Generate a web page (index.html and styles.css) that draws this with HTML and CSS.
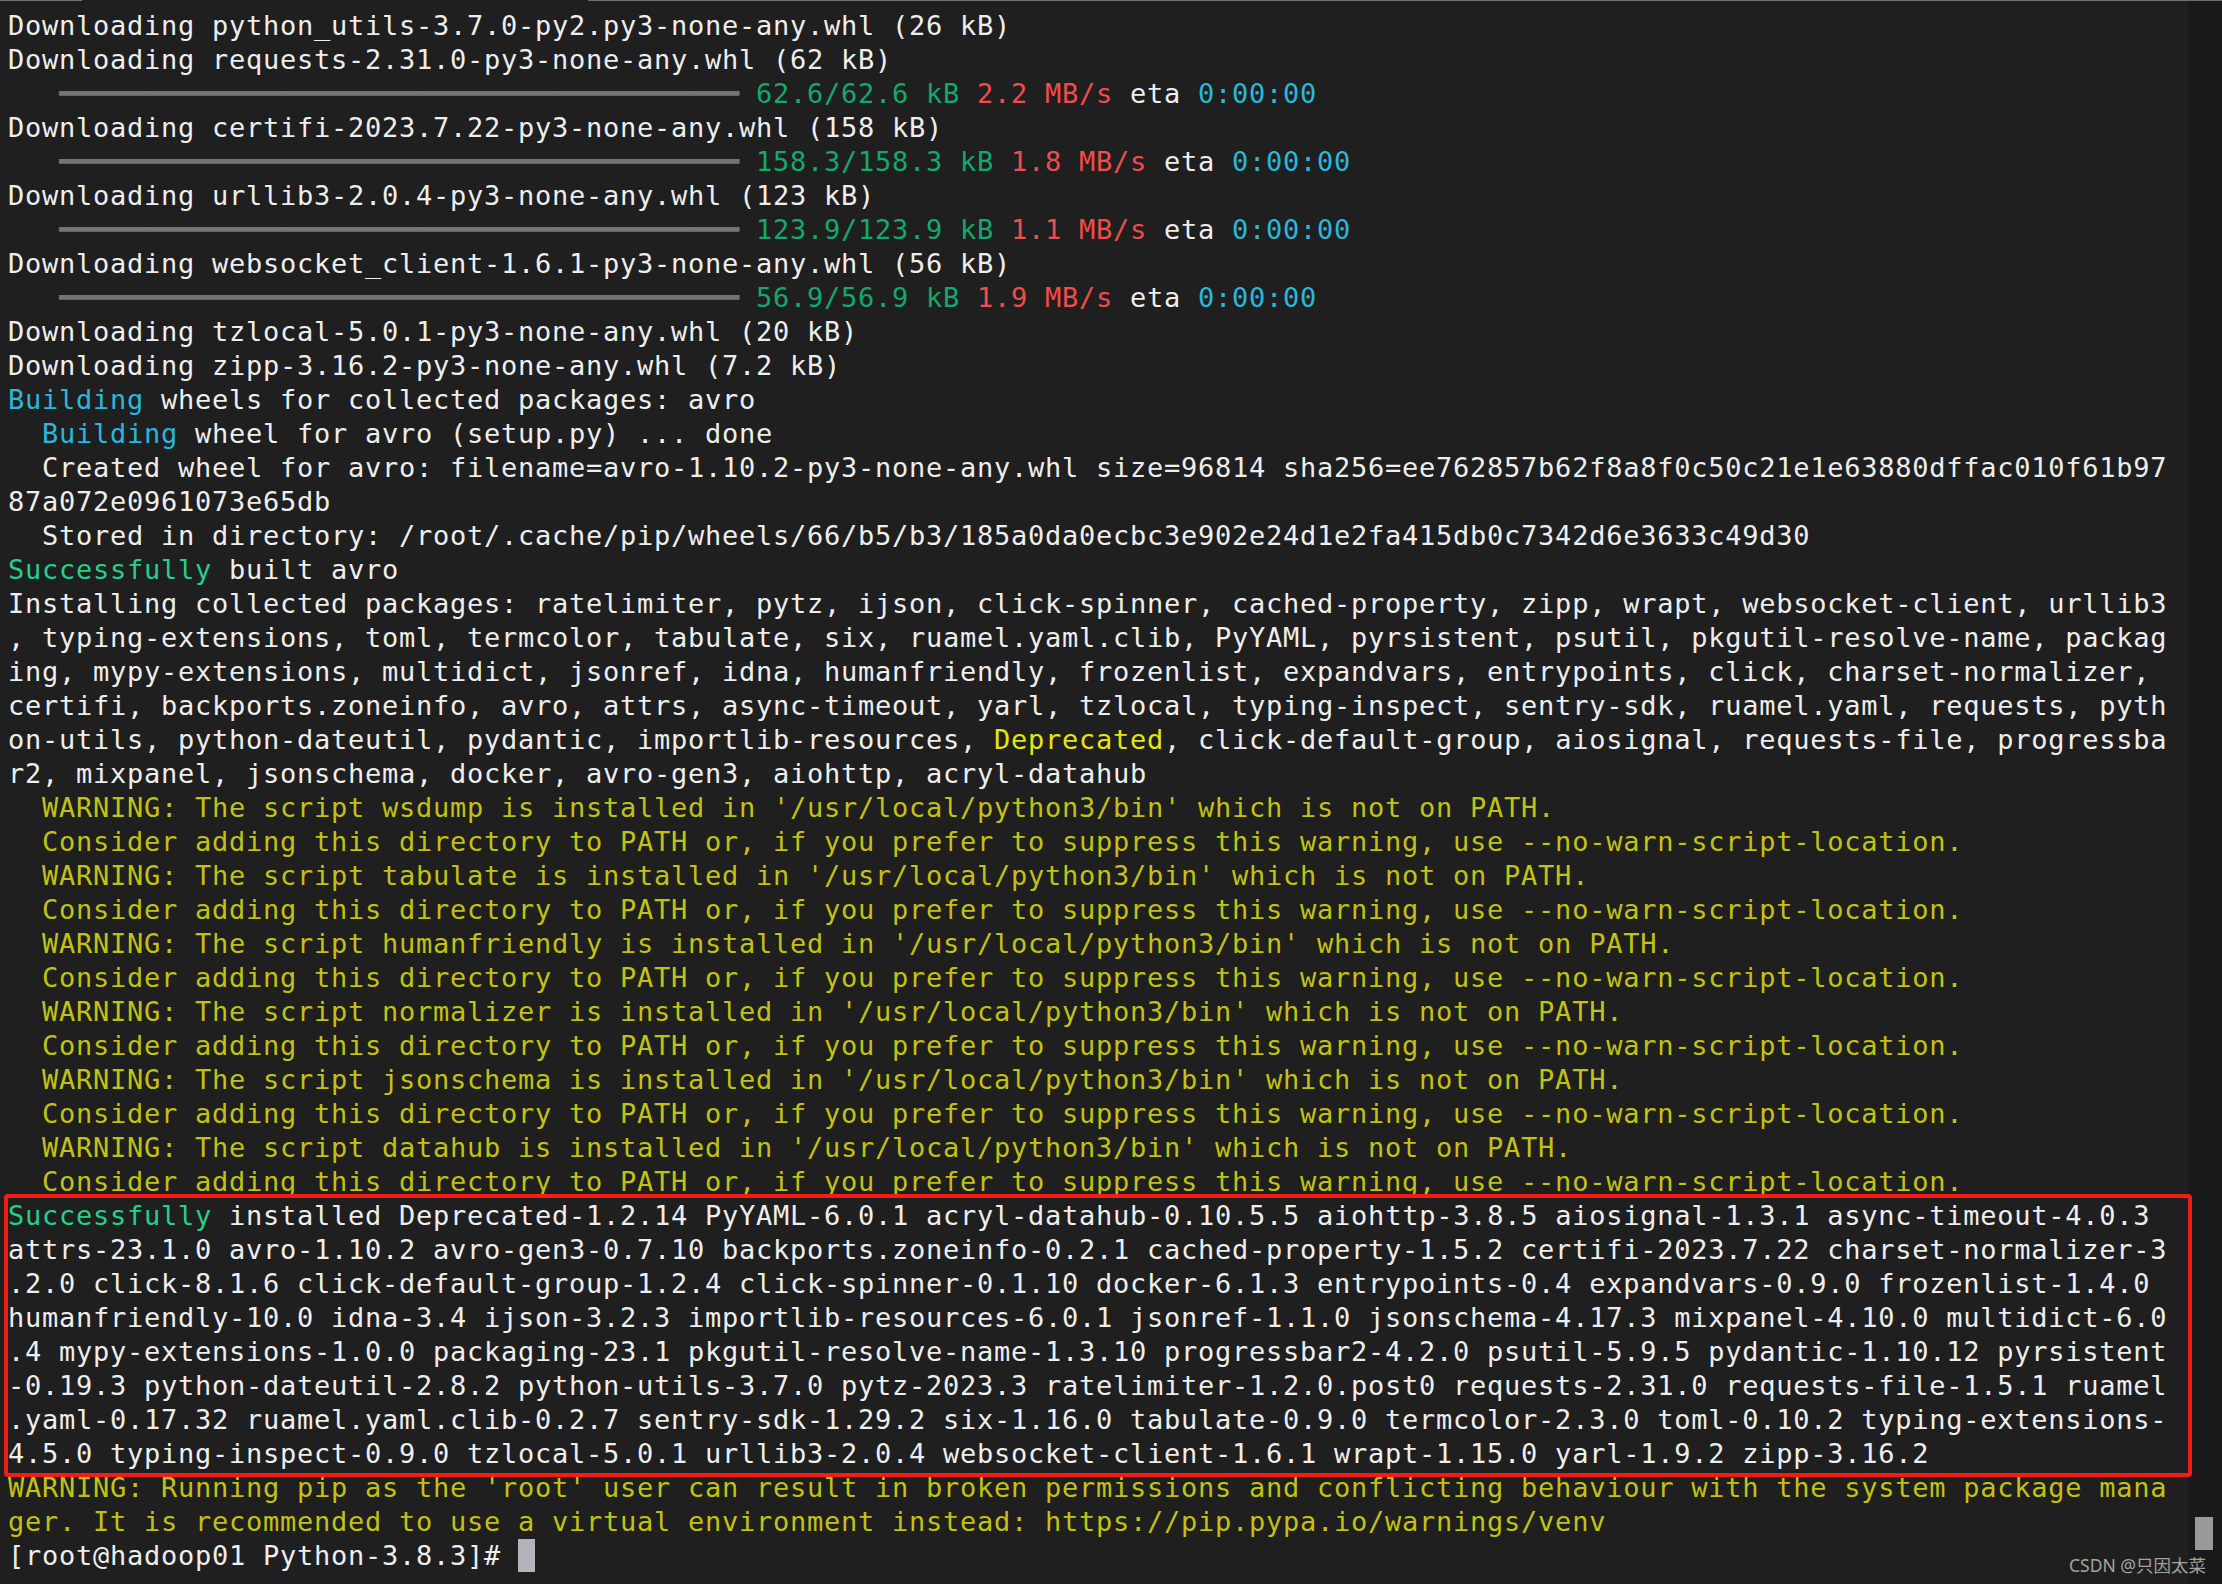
FILE: index.html
```html
<!DOCTYPE html>
<html lang="en">
<head>
<meta charset="utf-8">
<title>Terminal</title>
<link rel="stylesheet" href="styles.css">
</head>
<body>
<div class="topline"><span class="seg seg-a"></span><span class="gap"></span><span class="seg seg-b"></span></div>
<div class="window">
  <div class="term">
    <div class="ln">Downloading python_utils-3.7.0-py2.py3-none-any.whl (26 kB)</div>
    <div class="ln">Downloading requests-2.31.0-py3-none-any.whl (62 kB)</div>
    <div class="ln">   <span class="bar">━━━━━━━━━━━━━━━━━━━━━━━━━━━━━━━━━━━━━━━━</span> <span class="g">62.6/62.6 kB</span> <span class="r">2.2 MB/s</span> eta <span class="c">0:00:00</span></div>
    <div class="ln">Downloading certifi-2023.7.22-py3-none-any.whl (158 kB)</div>
    <div class="ln">   <span class="bar">━━━━━━━━━━━━━━━━━━━━━━━━━━━━━━━━━━━━━━━━</span> <span class="g">158.3/158.3 kB</span> <span class="r">1.8 MB/s</span> eta <span class="c">0:00:00</span></div>
    <div class="ln">Downloading urllib3-2.0.4-py3-none-any.whl (123 kB)</div>
    <div class="ln">   <span class="bar">━━━━━━━━━━━━━━━━━━━━━━━━━━━━━━━━━━━━━━━━</span> <span class="g">123.9/123.9 kB</span> <span class="r">1.1 MB/s</span> eta <span class="c">0:00:00</span></div>
    <div class="ln">Downloading websocket_client-1.6.1-py3-none-any.whl (56 kB)</div>
    <div class="ln">   <span class="bar">━━━━━━━━━━━━━━━━━━━━━━━━━━━━━━━━━━━━━━━━</span> <span class="g">56.9/56.9 kB</span> <span class="r">1.9 MB/s</span> eta <span class="c">0:00:00</span></div>
    <div class="ln">Downloading tzlocal-5.0.1-py3-none-any.whl (20 kB)</div>
    <div class="ln">Downloading zipp-3.16.2-py3-none-any.whl (7.2 kB)</div>
    <div class="ln"><span class="c">Building</span> wheels for collected packages: avro</div>
    <div class="ln">  <span class="c">Building</span> wheel for avro (setup.py) ... done</div>
    <div class="ln">  Created wheel for avro: filename=avro-1.10.2-py3-none-any.whl size=96814 sha256=ee762857b62f8a8f0c50c21e1e63880dffac010f61b97</div>
    <div class="ln">87a072e0961073e65db</div>
    <div class="ln">  Stored in directory: /root/.cache/pip/wheels/66/b5/b3/185a0da0ecbc3e902e24d1e2fa415db0c7342d6e3633c49d30</div>
    <div class="ln"><span class="bg">Successfully</span> built avro</div>
    <div class="ln">Installing collected packages: ratelimiter, pytz, ijson, click-spinner, cached-property, zipp, wrapt, websocket-client, urllib3</div>
    <div class="ln">, typing-extensions, toml, termcolor, tabulate, six, ruamel.yaml.clib, PyYAML, pyrsistent, psutil, pkgutil-resolve-name, packag</div>
    <div class="ln">ing, mypy-extensions, multidict, jsonref, idna, humanfriendly, frozenlist, expandvars, entrypoints, click, charset-normalizer,</div>
    <div class="ln">certifi, backports.zoneinfo, avro, attrs, async-timeout, yarl, tzlocal, typing-inspect, sentry-sdk, ruamel.yaml, requests, pyth</div>
    <div class="ln">on-utils, python-dateutil, pydantic, importlib-resources, <span class="by">Deprecated</span>, click-default-group, aiosignal, requests-file, progressba</div>
    <div class="ln">r2, mixpanel, jsonschema, docker, avro-gen3, aiohttp, acryl-datahub</div>
    <div class="ln y">  WARNING: The script wsdump is installed in '/usr/local/python3/bin' which is not on PATH.</div>
    <div class="ln y">  Consider adding this directory to PATH or, if you prefer to suppress this warning, use --no-warn-script-location.</div>
    <div class="ln y">  WARNING: The script tabulate is installed in '/usr/local/python3/bin' which is not on PATH.</div>
    <div class="ln y">  Consider adding this directory to PATH or, if you prefer to suppress this warning, use --no-warn-script-location.</div>
    <div class="ln y">  WARNING: The script humanfriendly is installed in '/usr/local/python3/bin' which is not on PATH.</div>
    <div class="ln y">  Consider adding this directory to PATH or, if you prefer to suppress this warning, use --no-warn-script-location.</div>
    <div class="ln y">  WARNING: The script normalizer is installed in '/usr/local/python3/bin' which is not on PATH.</div>
    <div class="ln y">  Consider adding this directory to PATH or, if you prefer to suppress this warning, use --no-warn-script-location.</div>
    <div class="ln y">  WARNING: The script jsonschema is installed in '/usr/local/python3/bin' which is not on PATH.</div>
    <div class="ln y">  Consider adding this directory to PATH or, if you prefer to suppress this warning, use --no-warn-script-location.</div>
    <div class="ln y">  WARNING: The script datahub is installed in '/usr/local/python3/bin' which is not on PATH.</div>
    <div class="ln y">  Consider adding this directory to PATH or, if you prefer to suppress this warning, use --no-warn-script-location.</div>
    <div class="boxed">
      <div class="ln"><span class="bg">Successfully</span> installed Deprecated-1.2.14 PyYAML-6.0.1 acryl-datahub-0.10.5.5 aiohttp-3.8.5 aiosignal-1.3.1 async-timeout-4.0.3</div>
      <div class="ln">attrs-23.1.0 avro-1.10.2 avro-gen3-0.7.10 backports.zoneinfo-0.2.1 cached-property-1.5.2 certifi-2023.7.22 charset-normalizer-3</div>
      <div class="ln">.2.0 click-8.1.6 click-default-group-1.2.4 click-spinner-0.1.10 docker-6.1.3 entrypoints-0.4 expandvars-0.9.0 frozenlist-1.4.0</div>
      <div class="ln">humanfriendly-10.0 idna-3.4 ijson-3.2.3 importlib-resources-6.0.1 jsonref-1.1.0 jsonschema-4.17.3 mixpanel-4.10.0 multidict-6.0</div>
      <div class="ln">.4 mypy-extensions-1.0.0 packaging-23.1 pkgutil-resolve-name-1.3.10 progressbar2-4.2.0 psutil-5.9.5 pydantic-1.10.12 pyrsistent</div>
      <div class="ln">-0.19.3 python-dateutil-2.8.2 python-utils-3.7.0 pytz-2023.3 ratelimiter-1.2.0.post0 requests-2.31.0 requests-file-1.5.1 ruamel</div>
      <div class="ln">.yaml-0.17.32 ruamel.yaml.clib-0.2.7 sentry-sdk-1.29.2 six-1.16.0 tabulate-0.9.0 termcolor-2.3.0 toml-0.10.2 typing-extensions-</div>
      <div class="ln">4.5.0 typing-inspect-0.9.0 tzlocal-5.0.1 urllib3-2.0.4 websocket-client-1.6.1 wrapt-1.15.0 yarl-1.9.2 zipp-3.16.2</div>
    </div>
    <div class="ln y">WARNING: Running pip as the 'root' user can result in broken permissions and conflicting behaviour with the system package mana</div>
    <div class="ln y">ger. It is recommended to use a virtual environment instead: https://pip.pypa.io/warnings/venv</div>
    <div class="ln">[root@hadoop01 Python-3.8.3]# <span class="cursor"></span></div>
  </div>
  <div class="scroll"><div class="thumb"></div></div>
</div>
<div class="watermark">CSDN @只因太菜</div>
</body>
</html>
```

FILE: styles.css
```css
html, body {
  margin: 0;
  padding: 0;
  height: 100%;
  overflow: hidden;
  background: #1f1f1f;
}

body {
  display: flex;
  flex-direction: column;
  position: relative;
}

.topline {
  display: flex;
  height: 1px;
  flex: none;
}

.seg {
  background: #6f6f6f;
}

.seg-a {
  width: 82px;
}

.gap {
  width: 506px;
  background: #1f1f1f;
}

.seg-b {
  flex: 1;
}

.window {
  flex: 1;
  display: flex;
  min-height: 0;
}

.term {
  flex: 1;
  padding: 8px 0 0 8px;
  font-family: "DejaVu Sans Mono", "Liberation Mono", monospace;
  font-size: 27px;
  letter-spacing: 0.746px;
  color: #eeeeee;
}

.ln {
  height: 34px;
  line-height: 34px;
  white-space: pre;
}

.bar {
  color: #747474;
  font-size: 28.24px;
  letter-spacing: 0;
}

.g {
  color: #13a96c;
}

.bg {
  color: #23d18b;
}

.r {
  color: #f14c4c;
}

.c {
  color: #29b8db;
}

.y {
  color: #c2c215;
}

.by {
  color: #e5e510;
}

.boxed {
  position: relative;
}

.boxed::after {
  content: "";
  position: absolute;
  left: -4px;
  top: -5px;
  right: -4px;
  bottom: -6px;
  border: 4px solid #f41d16;
  border-radius: 4px;
  pointer-events: none;
}

.cursor {
  display: inline-block;
  width: 17px;
  height: 33px;
  vertical-align: top;
  background: #b3b3bc;
}

.scroll {
  width: 34px;
  flex: none;
  background: #191919;
  display: flex;
  flex-direction: column;
  justify-content: flex-end;
  padding-bottom: 34px;
  box-sizing: border-box;
}

.thumb {
  width: 18px;
  height: 33px;
  margin-left: 7px;
  background: #999999;
}

.watermark {
  position: absolute;
  right: 16px;
  bottom: 8px;
  font-family: "Noto Sans", "Noto Sans CJK SC", sans-serif;
  font-size: 17.5px;
  line-height: 22px;
  color: #a3a3a3;
}
```
